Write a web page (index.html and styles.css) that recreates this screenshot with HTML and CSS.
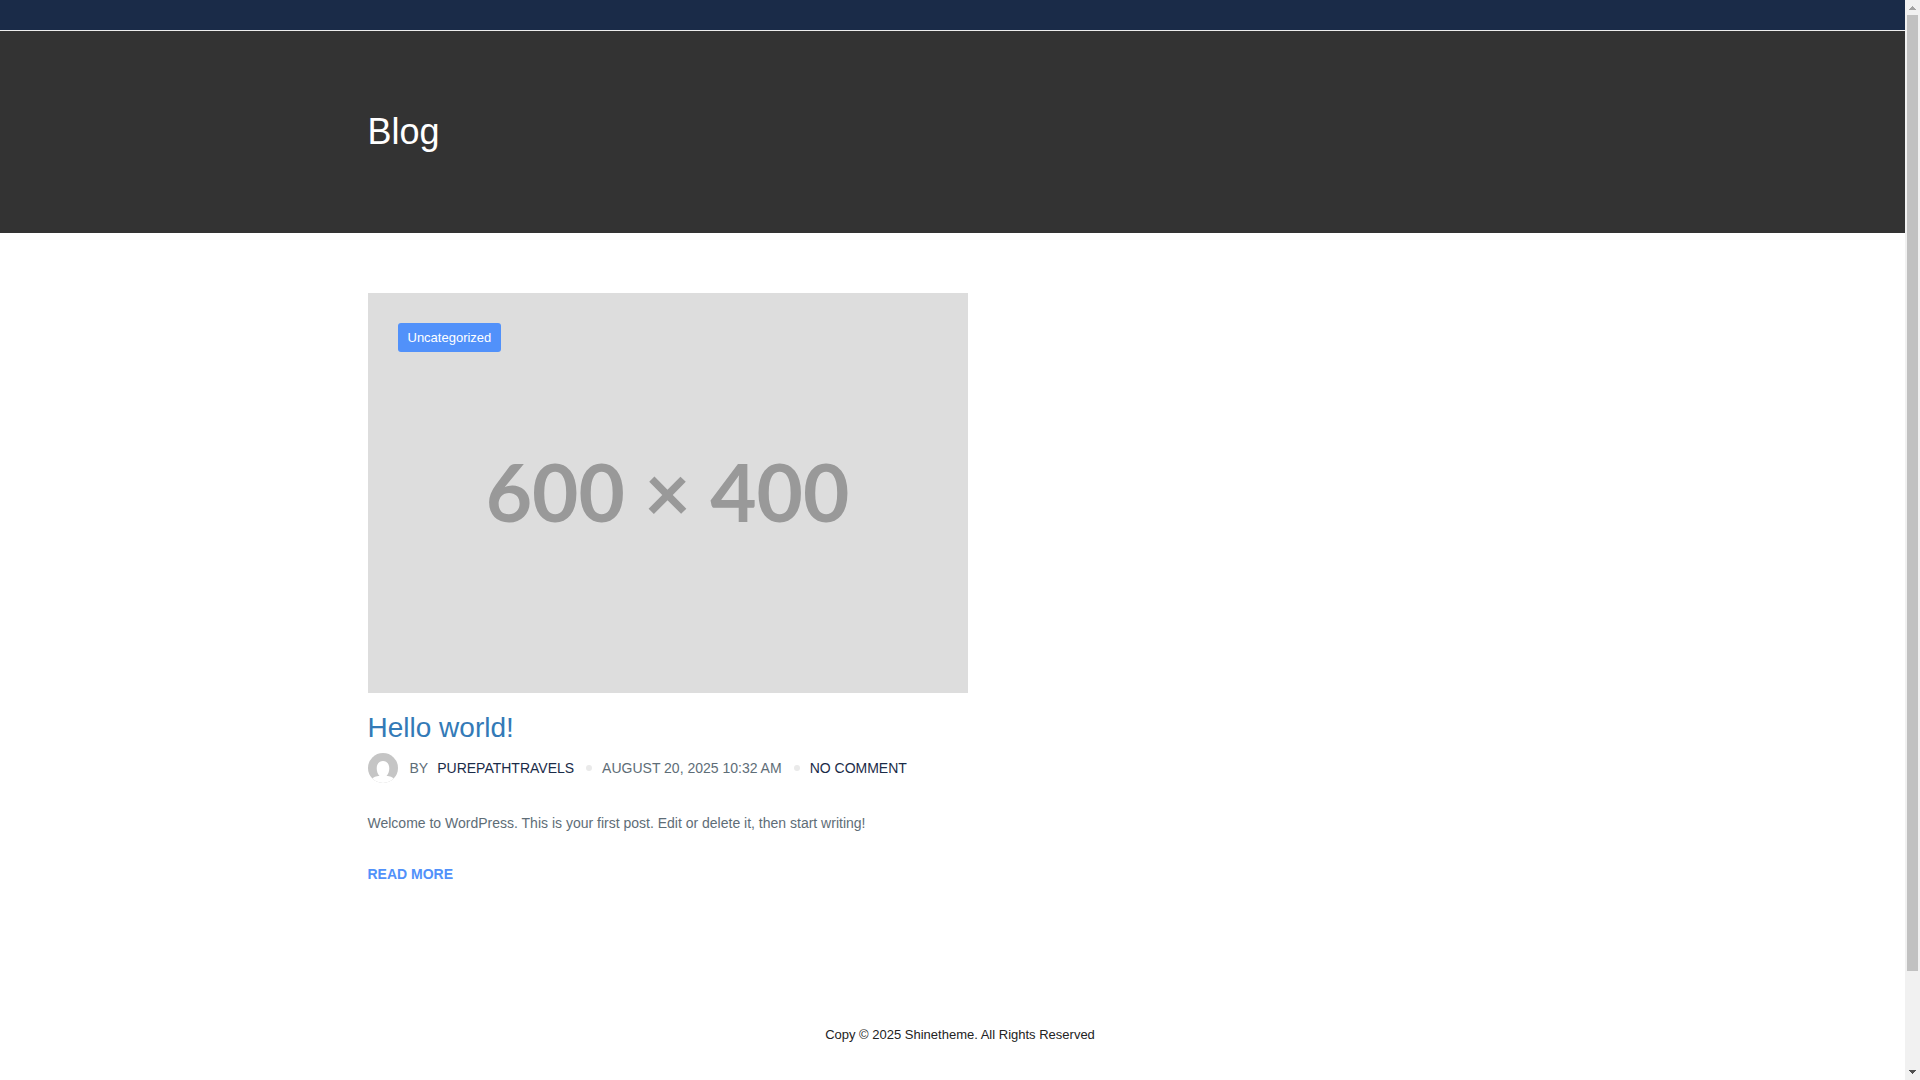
FILE: index.html
```html
<!DOCTYPE html>
<html lang="en">
<head>
<meta charset="utf-8">
<meta name="viewport" content="width=device-width, initial-scale=1">
<title>Blog</title>
<link rel="stylesheet" href="styles.css">
</head>
<body>
<div class="page">
  <header class="topbar"></header>
  <section class="banner">
    <div class="container">
      <h1 class="banner-title">Blog</h1>
    </div>
  </section>
  <main class="content">
    <div class="container">
      <article class="post">
        <div class="thumb">
          <span class="thumb-label">600 × 400</span>
          <a class="category" href="#">Uncategorized</a>
        </div>
        <h2 class="post-title"><a href="#">Hello world!</a></h2>
        <div class="meta">
          <svg class="avatar" viewBox="0 0 30 30" aria-hidden="true">
            <defs><clipPath id="round"><circle cx="15" cy="15" r="15"/></clipPath></defs>
            <g clip-path="url(#round)">
              <rect width="30" height="30" fill="#c5c5c5"/>
              <path d="M15 8c3.700 0 6.300 3 6.300 7.200 0 3.300-1.100 6-2.800 7.500 3.500.5 6 1.100 7.700 3.300L28 30H2l1.800-4c1.700-2.200 4.200-2.800 7.700-3.300-1.700-1.500-2.800-4.200-2.800-7.500C8.700 11 11.300 8 15 8z" fill="#fff"/>
            </g>
          </svg>
          <span class="by">BY</span>
          <a class="meta-link" href="#">PUREPATHTRAVELS</a>
          <span class="dot"></span>
          <span>AUGUST 20, 2025 10:32 AM</span>
          <span class="dot"></span>
          <a class="meta-link" href="#">NO COMMENT</a>
        </div>
        <p class="excerpt">Welcome to WordPress. This is your first post. Edit or delete it, then start writing!</p>
        <a class="read-more" href="#">READ MORE</a>
      </article>
    </div>
  </main>
  <footer class="footer">Copy © 2025 Shinetheme. All Rights Reserved</footer>
</div>
<div class="scrollbar" aria-hidden="true">
  <svg class="arrow" viewBox="0 0 15 15"><path d="M7 6h1v1h1v1h1v1h1v1H4V9h1V8h1V7h1z" fill="#a3a3a3"/></svg>
  <div class="track"><div class="handle"></div></div>
  <svg class="arrow" viewBox="0 0 15 15"><path d="M4 5h7v1h-1v1H9v1H8v1H7V8H6V7H5V6H4z" fill="#505050"/></svg>
</div>
</body>
</html>
```
FILE: styles.css
```css
* {
  box-sizing: border-box;
}

body {
  margin: 0;
  display: flex;
  min-height: 100vh;
  background: #fff;
  color: #5e6d77;
  font: 14px/24px "Liberation Sans", Arial, sans-serif;
}

a {
  text-decoration: none;
}

.page {
  flex: 1;
  min-width: 0;
  display: flex;
  flex-direction: column;
}

.topbar {
  height: 31px;
  background: #1a2b48;
  border-bottom: 1px solid #eee;
}

.banner {
  padding: 80px 0;
  background: #333;
}

.container {
  width: 100%;
  max-width: 1200px;
  margin: 0 auto;
  padding: 0 15px;
}

.banner-title {
  margin: 0;
  color: #fff;
  font-size: 36px;
  line-height: 42px;
  font-weight: 400;
}

.content {
  flex: 1;
  padding: 60px 0;
}

.post {
  max-width: 600px;
}

.thumb {
  position: relative;
  display: flex;
  align-items: center;
  justify-content: center;
  aspect-ratio: 3 / 2;
  padding-bottom: 4px;
  background: #ddd;
}

.thumb-label {
  color: #999;
  font: 700 80px/96px Lato, sans-serif;
}

.category {
  position: absolute;
  top: 30px;
  left: 30px;
  padding: 5px 10px 4px;
  border-radius: 3px;
  background: #5191fa;
  color: #fff;
  font-size: 13px;
  line-height: 20px;
}

.post-title {
  margin: 19px 0 9px;
  font-size: 28px;
  line-height: 32px;
  font-weight: 400;
}

.post-title a {
  color: #337ab7;
}

.meta {
  display: flex;
  flex-wrap: wrap;
  align-items: center;
}

.avatar {
  width: 30px;
  height: 30px;
}

.by {
  margin: 0 9px 0 12px;
}

.meta-link {
  color: #1a2b48;
}

.dot {
  width: 6px;
  height: 6px;
  margin: 0 10px 0 12px;
  border-radius: 50%;
  background: #eaeaea;
}

.excerpt {
  margin: 28px 0;
}

.read-more {
  display: block;
  width: fit-content;
  color: #5191fa;
  font-weight: 700;
  line-height: 22px;
}

.footer {
  padding: 0 0 35px 15px;
  color: #232323;
  font-size: 13px;
  line-height: 20px;
  text-align: center;
}

.scrollbar {
  position: sticky;
  top: 0;
  display: flex;
  flex-direction: column;
  width: 15px;
  height: 100vh;
  background: #f1f1f1;
}

.arrow {
  width: 15px;
  height: 15px;
}

.track {
  flex: 1;
  padding: 0 2px;
}

.handle {
  height: 91%;
  background: #c1c1c1;
}
```
